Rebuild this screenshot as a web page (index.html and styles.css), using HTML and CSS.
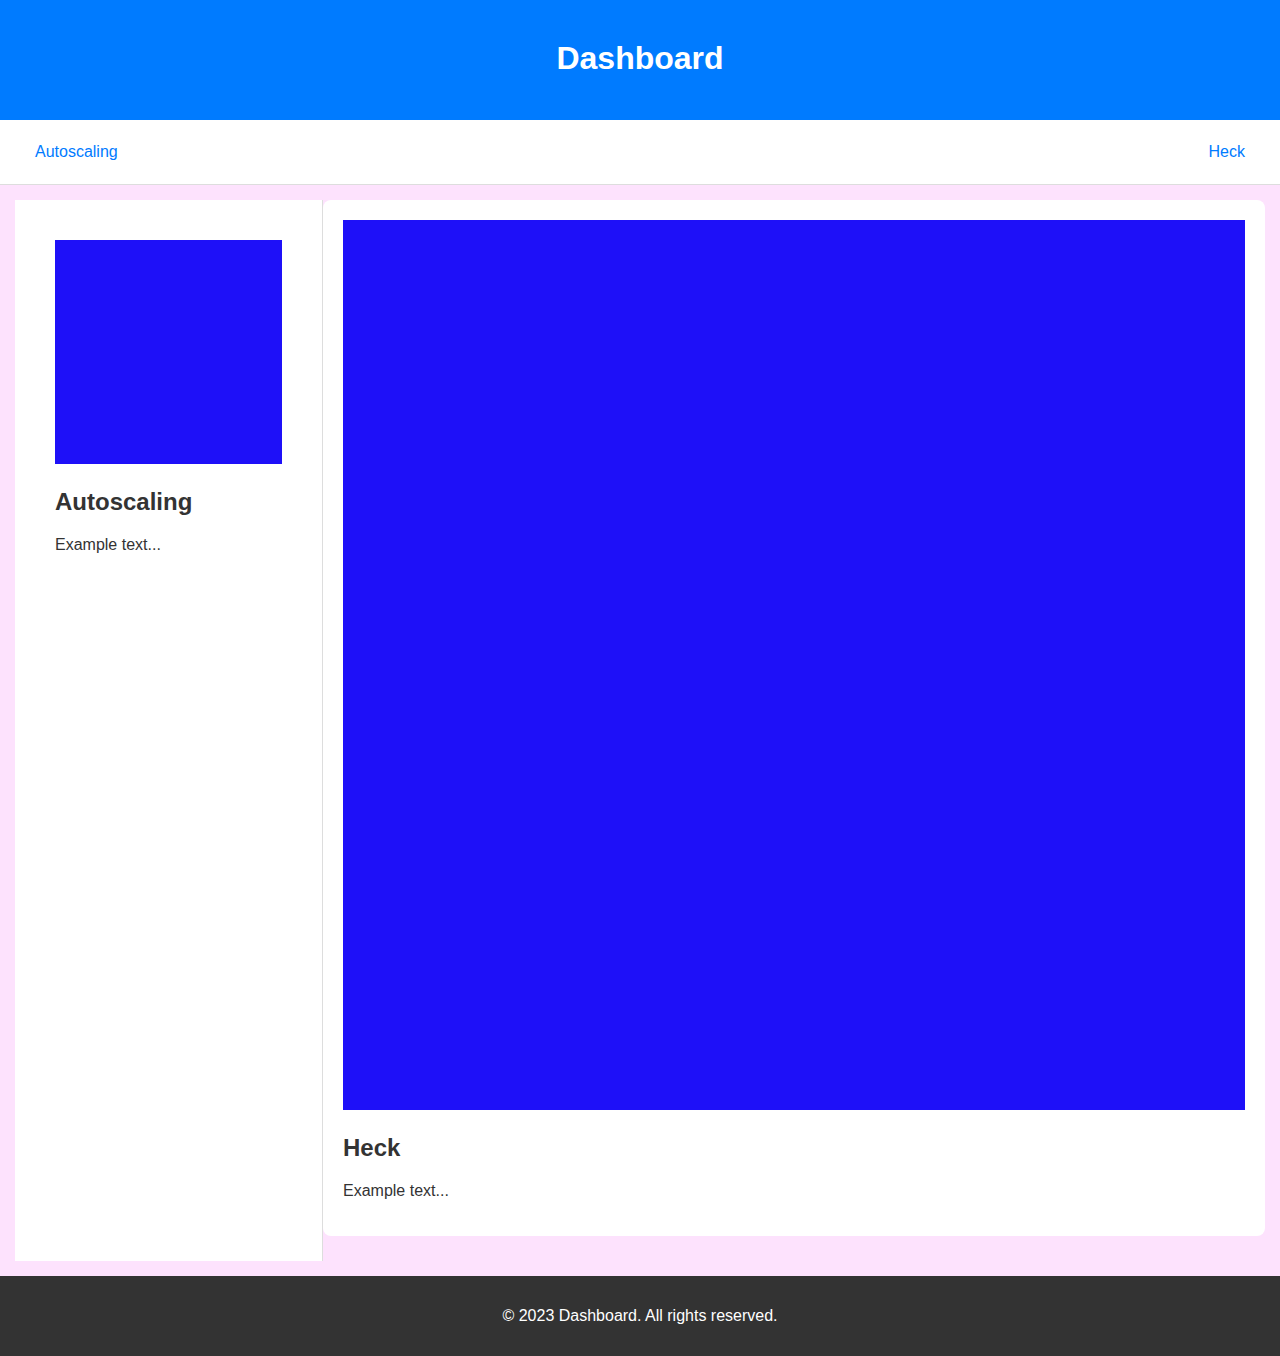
FILE: index.html
```html
<!DOCTYPE html>
<html lang="en">
<head>
<meta charset="utf-8">
<title>Dashboard</title>
<link rel="stylesheet" href="styles.css">
</head>
<body>
<header class="header"><h1 class="title">Dashboard</h1></header>
<nav class="nav">
  <a class="nav-link" href="#">Autoscaling</a>
  <a class="nav-link" href="#">Heck</a>
</nav>
<main class="main">
  <aside class="sidebar">
    <div class="tile tile-small"></div>
    <h2 class="heading">Autoscaling</h2>
    <p class="text">Example text...</p>
  </aside>
  <section class="content">
    <div class="card">
      <div class="tile tile-large"></div>
      <h2 class="heading">Heck</h2>
      <p class="text">Example text...</p>
    </div>
  </section>
</main>
<footer class="footer"><p class="footer-text">© 2023 Dashboard. All rights reserved.</p></footer>
</body>
</html>
```
FILE: styles.css
```css
* { box-sizing: border-box; }
body {
  margin: 0;
  font-family: "Liberation Sans", Arial, sans-serif;
  color: #333;
  background: #fde2fd;
}
.header {
  background: #007bff;
  height: 120px;
  display: flex;
  align-items: center;
  justify-content: center;
  padding-bottom: 3px;
}
.title {
  margin: 0;
  color: #fff;
  font-size: 32px;
  font-weight: bold;
}
.nav {
  background: #fff;
  height: 65px;
  border-bottom: 1px solid #ddd;
  display: flex;
  justify-content: space-between;
  align-items: center;
  padding: 0 35px 0 35px;
}
.nav-link {
  color: #007bff;
  text-decoration: none;
  font-size: 16px;
  line-height: 18px;
}
.main {
  display: flex;
  align-items: stretch;
  padding: 15px;
}
.sidebar {
  width: 308px;
  flex: none;
  background: #fff;
  border-right: 1px solid #ddd;
  padding: 40px;
}
.content {
  flex: 1;
  padding-bottom: 25px;
}
.card {
  background: #fff;
  border-radius: 8px;
  padding: 20px 20px 1px 20px;
}
.tile {
  background: #1e10f8;
}
.tile-small { height: 224px; }
.tile-large { height: 890px; }
.heading {
  font-size: 24px;
  font-weight: bold;
  margin: 24px 0 20px;
  line-height: 28px;
}
.text {
  font-size: 16px;
  line-height: 18px;
  margin: 0 0 35px;
}
.sidebar .text { margin-bottom: 0; }
.footer {
  background: #333;
  height: 80px;
  display: flex;
  align-items: center;
  justify-content: center;
}
.footer-text {
  margin: 0;
  color: #fff;
  font-size: 16px;
}
```
